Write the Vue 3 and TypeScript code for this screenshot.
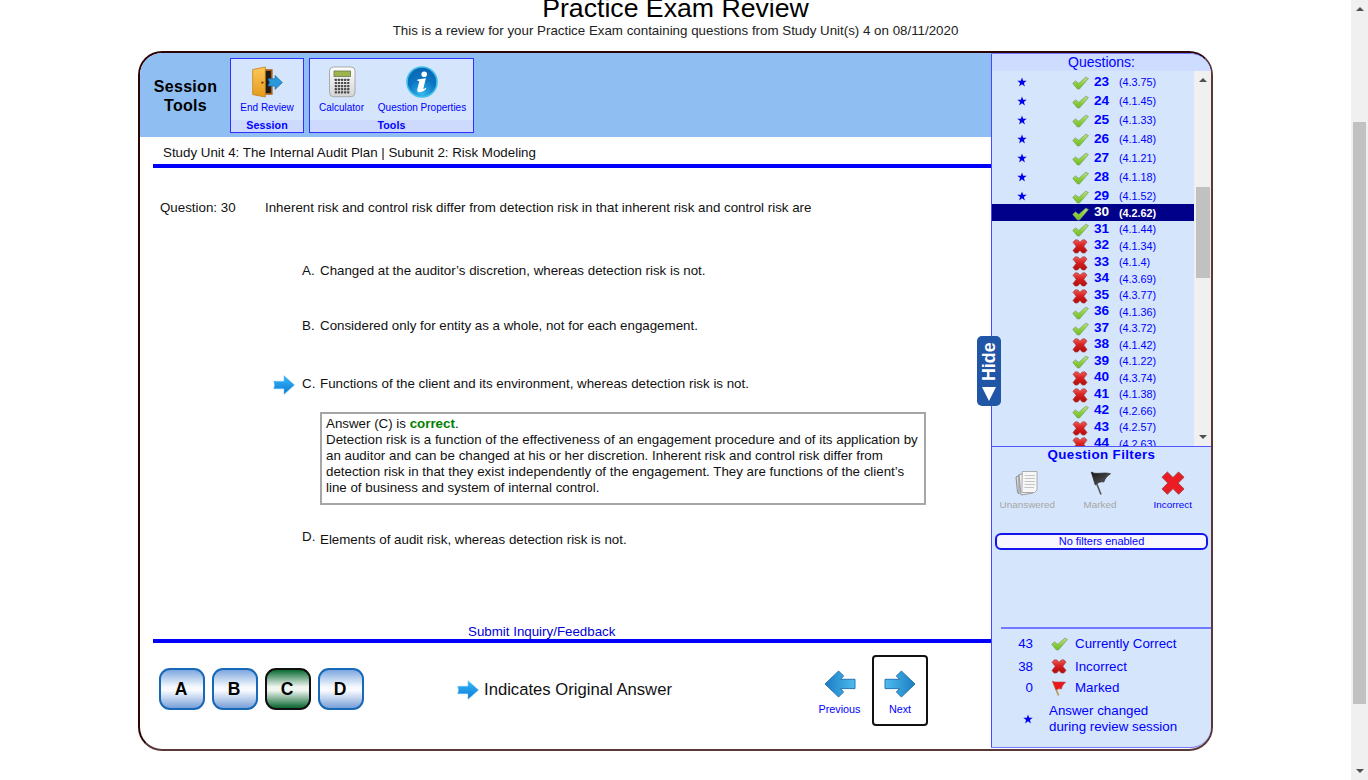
<script setup lang="ts">
interface Question { n: number; code: string; ok: boolean; changed: boolean }

const codes = ['4.3.75', '4.1.45', '4.1.33', '4.1.48', '4.1.21', '4.1.18', '4.1.52', '4.2.62', '4.1.44', '4.1.34', '4.1.4', '4.3.69', '4.3.77', '4.1.36', '4.3.72', '4.1.42', '4.1.22', '4.3.74', '4.1.38', '4.2.66', '4.2.57', '4.2.63']
const wrong = [32, 33, 34, 35, 38, 40, 41, 43, 44]
const current = 30
const questions: Question[] = codes.map((code, i) => ({
  n: 23 + i,
  code,
  ok: !wrong.includes(23 + i),
  changed: i < 7,
}))
const letters = ['A', 'B', 'C', 'D']
</script>

<template>
  <div class="window">
    <svg class="defs" width="0" height="0">
      <defs>
        <linearGradient id="gGreen" x1="0" y1="0" x2="0" y2="1"><stop offset="0" stop-color="#b8e484" /><stop offset=".5" stop-color="#8fd13f" /><stop offset="1" stop-color="#6cbc22" /></linearGradient>
        <linearGradient id="gRed" x1="0" y1="0" x2="0" y2="1"><stop offset="0" stop-color="#ee5a55" /><stop offset=".45" stop-color="#d81f1f" /><stop offset="1" stop-color="#b00c0c" /></linearGradient>
        <linearGradient id="gArrow" x1="0" y1="0" x2="0" y2="1"><stop offset="0" stop-color="#35b8f8" /><stop offset="1" stop-color="#0d7ad6" /></linearGradient>
        <linearGradient id="gNav" x1="0" y1="0" x2="1" y2="0"><stop offset="0" stop-color="#4cbcee" /><stop offset="1" stop-color="#1c7cc2" /></linearGradient>
        <linearGradient id="gNavBack" x1="1" y1="0" x2="0" y2="0"><stop offset="0" stop-color="#4cbcee" /><stop offset="1" stop-color="#1c7cc2" /></linearGradient>
        <linearGradient id="gDoor" x1="0" y1="0" x2="0" y2="1"><stop offset="0" stop-color="#fdc95a" /><stop offset="1" stop-color="#e59a1c" /></linearGradient>
        <radialGradient id="gInfo" cx=".5" cy=".9" r=".8"><stop offset="0" stop-color="#35b9ee" /><stop offset=".6" stop-color="#0c76c4" /><stop offset="1" stop-color="#0a68b6" /></radialGradient>
        <linearGradient id="gCalc" x1="0" y1="0" x2="0" y2="1"><stop offset="0" stop-color="#ffffff" /><stop offset="1" stop-color="#d4d4d4" /></linearGradient>
        <linearGradient id="gFlag" x1="0" y1="0" x2="1" y2="1"><stop offset="0" stop-color="#151515" /><stop offset="1" stop-color="#666" /></linearGradient>
        <symbol id="check" viewBox="0 0 17 14"><path d="M.8 7.4 3.4 4.9 6.8 7.4 13.8 1.2 16.4 2.6 7.4 13 5.4 12.9Z" fill="url(#gGreen)" stroke="#7f9f66" stroke-width=".8" stroke-linejoin="round" /></symbol>
        <symbol id="cross" viewBox="0 0 16 15"><path d="M1 3.3 3.3 .8 6 1 8 3.2 10.3 1 12.9 .8 15 3.1 11.8 7.2 15 11.4 12.8 14.1 10.2 13.9 8 11.4 5.7 13.9 3.1 14.1 1 11.6 4.2 7.3Z" fill="url(#gRed)" stroke="#a44242" stroke-width=".7" stroke-linejoin="round" /></symbol>
        <symbol id="star" viewBox="0 0 10 10"><path d="M5 .4 6.2 3.7 9.7 3.7 6.9 5.9 7.9 9.4 5 7.3 2.1 9.4 3.1 5.9 .3 3.7 3.8 3.7Z" fill="#0000f0" /></symbol>
        <symbol id="point" viewBox="0 0 22 20"><path d="M.8 6.3H11V.7L21.5 10 11 19.3V13.7H.8L1.6 10Z" fill="url(#gArrow)" stroke="#64baf3" stroke-width=".5" /></symbol>
      </defs>
    </svg>

    <main class="page">
      <h1>Practice Exam Review</h1>
      <p class="subtitle">This is a review for your Practice Exam containing questions from Study Unit(s) 4 on 08/11/2020</p>

      <div class="exam">
        <section class="work">
          <header class="toolbar">
            <div class="tool-title">Session<br />Tools</div>
            <div class="group session">
              <div class="tools">
                <div class="tool">
                  <svg width="32" height="32" viewBox="0 0 32 32"><path d="M10 4.2H20.7V27.8H10Z" fill="#1d1a18" stroke="#a65b16" stroke-width="1.8" /><path d="M1.7 3.6 14.3 1V31L1.7 28.6Z" fill="url(#gDoor)" stroke="#c57d17" stroke-width=".8" /><circle cx="11.4" cy="16.6" r="1.2" fill="#704208" /><path d="M17 12.8H24V9.4L31.4 16.6 24 23.4V20H17L18.6 16.4Z" fill="#2b98d9" stroke="#1d6ba8" stroke-width=".7" /></svg>
                  <span>End Review</span>
                </div>
              </div>
              <div class="caption">Session</div>
            </div>
            <div class="group utils">
              <div class="tools">
                <div class="tool calc">
                  <svg width="32" height="32" viewBox="0 0 32 32"><rect x="3.5" y="1" width="25.5" height="29.7" rx="4" fill="url(#gCalc)" stroke="#aaa" /><rect x="8" y="5" width="16.5" height="5.5" fill="#9bb54a" stroke="#6b7852" stroke-width=".8" /><g fill="#4a4a4a"><template v-for="r in 5" :key="r"><rect v-for="c in 5" :key="c" :x="5.6 + c * 3.1" :y="9.7 + r * 3.1" width="2.3" height="2.2" rx=".4" /></template></g></svg>
                  <span>Calculator</span>
                </div>
                <div class="tool props">
                  <svg width="32" height="32" viewBox="0 0 32 32"><circle cx="16" cy="16" r="15" fill="url(#gInfo)" stroke="#3ec0e8" stroke-width="1.6" /><circle cx="18.2" cy="8.2" r="2.8" fill="#fff" /><path d="M11.5 13.4 19.9 12.2 17.4 22.2C17 23.6 18 23.2 19.6 21.8L20.2 22.8C17 26.8 10.4 28 11.3 23.4L13.3 15.3 11.2 14.8Z" fill="#fff" /></svg>
                  <span>Question Properties</span>
                </div>
              </div>
              <div class="caption">Tools</div>
            </div>
          </header>

          <div class="unit"><span>Study Unit 4: The Internal Audit Plan | Subunit 2: Risk Modeling</span></div>

          <div class="question">
            <div class="stem"><span class="qno">Question: 30</span><span>Inherent risk and control risk differ from detection risk in that inherent risk and control risk are</span></div>
            <div class="option a"><span class="mark"></span><b>A.</b><span>Changed at the auditor’s discretion, whereas detection risk is not.</span></div>
            <div class="option b"><span class="mark"></span><b>B.</b><span>Considered only for entity as a whole, not for each engagement.</span></div>
            <div class="option c"><span class="mark"><svg width="22" height="20"><use href="#point" /></svg></span><b>C.</b><span>Functions of the client and its environment, whereas detection risk is not.</span></div>
            <div class="explain">
              <div>Answer (C) is <strong>correct</strong>.</div>
              <div>Detection risk is a function of the effectiveness of an engagement procedure and of its application by</div>
              <div>an auditor and can be changed at his or her discretion. Inherent risk and control risk differ from</div>
              <div>detection risk in that they exist independently of the engagement. They are functions of the client’s</div>
              <div>line of business and system of internal control.</div>
            </div>
            <div class="option d"><span class="mark"></span><b>D.</b><span>Elements of audit risk, whereas detection risk is not.</span></div>
            <div class="inquiry"><span>Submit Inquiry/Feedback</span></div>
          </div>

          <footer class="bottom">
            <div class="choices">
              <button v-for="l in letters" :key="l" :class="{ picked: l === 'C' }">{{ l }}</button>
            </div>
            <div class="original"><svg width="22" height="20"><use href="#point" /></svg><span>Indicates Original Answer</span></div>
            <div class="nav prev"><svg width="32" height="28" viewBox="0 0 32 28"><path d="M31 9.3H16.5L19.6 6 14.6 1 1 14 14.6 27 19.6 21.9 16.5 18.6H31Z" fill="url(#gNavBack)" stroke="#2476b6" /></svg><span>Previous</span></div>
            <div class="nav next"><svg width="32" height="28" viewBox="0 0 32 28"><path d="M1 9.3H15.5L12.4 6 17.4 1 31 14 17.4 27 12.4 21.9 15.5 18.6H1Z" fill="url(#gNav)" stroke="#2476b6" /></svg><span>Next</span></div>
          </footer>
        </section>

        <aside class="side">
          <div class="side-head"><span>Questions:</span></div>
          <div class="list-wrap">
            <div class="list">
              <div v-for="q in questions" :key="q.n" class="row" :class="{ tall: q.changed, current: q.n === current }">
                <span class="star"><svg v-if="q.changed" width="10" height="10"><use href="#star" /></svg></span>
                <span class="state"><svg v-if="q.ok" width="17" height="14"><use href="#check" /></svg><svg v-else width="16" height="15"><use href="#cross" /></svg></span>
                <span class="num">{{ q.n }}</span>
                <span class="code">({{ q.code }})</span>
              </div>
            </div>
            <div class="scroll inner"><i class="up"></i><div class="thumb"></div><i class="down"></i></div>
          </div>
          <div class="filters">
            <div class="filter-title">Question Filters</div>
            <div class="filter-set">
              <div class="filter off">
                <svg width="26" height="26" viewBox="0 0 26 26"><path d="M2 7 5 5.5V24L3.5 22.5Z" fill="#ddd" stroke="#777" stroke-width=".8" /><path d="M5 4.5 17 3 19 23 7 25Z" fill="#eee" stroke="#888" stroke-width=".8" /><path d="M8.3 1.5H23V20L20.5 22.5H7.9Z" fill="#f7f7f7" stroke="#999" stroke-width=".8" /><path d="M10.5 5.5H21M10.5 8.5H21M10.5 11.5H21M10.5 14.5H21M10.5 17.5H20" stroke="#c4c4c4" stroke-width="1" /></svg>
                <span>Unanswered</span>
              </div>
              <div class="filter off">
                <svg width="26" height="26" viewBox="0 0 26 26"><path d="M5 2 14 24.5" stroke="#555" stroke-width="1.6" /><path d="M4.3 2.2C10 5 16 1.6 23.6 3.7 19.8 6 17.8 9 16.8 12 13.5 11.2 11 12.7 8.2 15Z" fill="url(#gFlag)" stroke="#222" stroke-width=".6" /></svg>
                <span>Marked</span>
              </div>
              <div class="filter">
                <svg width="26" height="26" viewBox="0 0 26 26"><path d="M2 7.2 7.4 2 13 7.6 18.5 2 24 7.2 18.2 13.1 24 18.9 18.6 24.3 13 18.6 7.4 24.3 2 18.9 7.8 13.1Z" fill="#ec1c24" stroke="#a23a3f" stroke-width=".9" /></svg>
                <span>Incorrect</span>
              </div>
            </div>
            <div class="field">No filters enabled</div>
          </div>
          <div class="summary">
            <div class="sum s1"><span class="count">43</span><span class="ic"><svg width="17" height="14"><use href="#check" /></svg></span><span>Currently Correct</span></div>
            <div class="sum s2"><span class="count">38</span><span class="ic"><svg width="16" height="15"><use href="#cross" /></svg></span><span>Incorrect</span></div>
            <div class="sum s3"><span class="count">0</span><span class="ic"><svg width="16" height="16" viewBox="0 0 16 16"><path d="M2 1.5 7.5 15.5" stroke="#b9964c" stroke-width="1.6" /><path d="M1.5 1.2C5.5 3 9 1.2 14.8 2.2 12.2 4.2 10.7 6.5 10.6 9 8.2 8.6 6.5 9.2 5 10Z" fill="#e8191b" stroke="#b94b3f" stroke-width=".5" /></svg></span><span>Marked</span></div>
            <div class="changed"><span class="count"><svg width="10" height="10"><use href="#star" /></svg></span><span>Answer changed<br />during review session</span></div>
          </div>
        </aside>
        <button class="hide"><span>Hide</span><i></i></button>
      </div>
    </main>
    <div class="scroll outer"><i class="up"></i><div class="thumb"></div><i class="down"></i></div>
  </div>
</template>

<style>
body { margin: 0; overflow: hidden; background: #fff; }
</style>

<style scoped>
* { box-sizing: border-box; }
.window { display: flex; width: 1368px; height: 780px; overflow: hidden; font: 13.333px/20px "Liberation Sans", Arial, sans-serif; color: #111; white-space: nowrap; }
.defs { position: absolute; }
svg { display: block; flex: none; }
.page { width: 1351px; }
h1 { margin: -7px 0 0; font-weight: 400; font-size: 26.667px; line-height: 30px; text-align: center; height: 30px; color: #000; }
.subtitle { margin: -2px 0 0; text-align: center; height: 30px; line-height: 20px; color: #222; }
.exam { position: relative; display: flex; width: 1075px; height: 700px; margin-left: 138px; border: 2px solid; border-color: #2c0404 #5a3838 #5a3838 #2c0404; border-radius: 24px; }
.work { width: 851px; }
.toolbar { display: flex; height: 84px; padding: 5px 0 0; background: #8fbff2; border-radius: 22px 0 0 0; }
.tool-title { width: 90px; padding: 19px 0 0 1px; font: 700 16px/19px "Liberation Sans", Arial, sans-serif; text-align: center; letter-spacing: .3px; color: #000; }
.group { display: flex; flex-direction: column; height: 75px; border: 1px solid #3030ff; background: #d5e5fb; color: #0000ff; }
.session { width: 74px; margin-right: 5px; }
.utils { width: 165px; }
.tools { display: flex; height: 61px; padding-top: 7px; }
.tool { display: flex; flex-direction: column; align-items: center; flex: 1; font-size: 10px; line-height: 12px; }
.tool span { margin-top: 4px; }
.calc { flex: 0 0 63px; }
.props { flex: 0 0 98px; }
.caption { height: 12px; background: #cddafe; text-align: center; font-weight: 700; font-size: 10.667px; line-height: 11px; letter-spacing: .1px; }
.unit { height: 31px; margin-left: 13px; padding: 6px 0 0 10px; border-bottom: 4px solid #0000fa; }
.question { display: flex; flex-direction: column; height: 475px; margin-left: 13px; padding-top: 30px; border-bottom: 4px solid #0000fa; }
.question > * { flex: none; }
.stem { display: flex; padding-left: 7px; margin-bottom: 43px; height: 20px; }
.qno { width: 105px; }
.option { display: flex; height: 20px; }
.option b { width: 18px; font-weight: 400; }
.mark { width: 29px; margin-left: 120px; height: 20px; }
.b { margin-top: 35px; }
.c { margin-top: 38px; }
.c .mark svg { margin-top: 1px; }
.d { margin-top: 25px; }
.d b { margin-top: -3px; }
.explain { width: 606px; height: 93px; margin: 18px 0 0 167px; padding: 2px 0 0 4px; border: 2px solid #a6a6a6; line-height: 16px; }
.explain strong { color: #008000; }
.inquiry { margin-top: 72px; height: 20px; padding-left: 315px; color: #0000d8; }
.bottom { display: flex; align-items: flex-start; padding: 12px 0 0 19px; }
.choices { display: flex; gap: 7px; padding-top: 13px; width: 298px; }
.choices button { width: 46px; height: 42px; padding: 0 2px 0 0; border: 2px solid #1769b8; border-radius: 11px; font: 700 17.5px/36px "Liberation Sans", Arial, sans-serif; color: #000; background: linear-gradient(#7da8df, #f5f8fd 44%, #f8faff 54%, #789fd8); }
.choices .picked { border-color: #101010; background: linear-gradient(#0b6a32, #eff5f1 44%, #eef5f0 54%, #08662e); }
.original { display: flex; align-items: center; padding-top: 25px; width: 352px; font-size: 16.667px; }
.original span { margin-left: 5px; }
.nav { display: flex; flex-direction: column; align-items: center; height: 71px; font-size: 10.8px; color: #0000ff; line-height: 14px; padding-top: 15px; }
.nav span { margin-top: 4px; }
.prev { width: 61px; margin-right: 2px; }
.next { width: 56px; border: 2px solid #111; border-radius: 4px; padding-top: 13px; }
.side { width: 220px; height: 695px; border-left: 1px solid #4848ff; border-bottom: 1px solid #7777ff; border-top: 1px solid #7777ff; border-radius: 0 21px 21px 0; overflow: hidden; background: #d5e5fb; color: #0000ff; }
.side-head { height: 17px; background: #cddcff; text-align: center; font-size: 14px; line-height: 17px; }
.list-wrap { display: flex; height: 376px; border-bottom: 1px solid #5555ff; }
.list { flex: 1; overflow: hidden; height: 375px; }
.row { display: flex; align-items: center; height: 16.5px; }
.tall { height: 19px; padding-top: 3px; }
.current { background: #00008b; color: #fff; height: 17px; }
.current .code { font-weight: 700; letter-spacing: 0; }
.star { width: 10px; margin-left: 25px; }
.state { width: 17px; margin: 2px 5px 0 45px; }
.num { width: 25px; font-size: 13.6px; line-height: 16px; font-weight: 700; margin-top: -1px; }
.code { font-size: 10.8px; line-height: 16px; }
.scroll { display: flex; flex-direction: column; width: 17px; background: #f0f0f0; }
.thumb { background: #c1c1c1; width: 13px; margin: 0 auto; }
.up, .down { width: 0; height: 0; border: 4px solid transparent; margin: 0 auto; flex: none; }
.up { border-bottom-color: #505050; border-top: 0; }
.down { border-top-color: #505050; border-bottom: 0; margin-top: auto; }
.inner { height: 375px; padding: 7px 0; }
.inner .thumb { height: 91px; margin-top: 105px; width: 14px; }
.outer { height: 780px; padding: 7px 0; }
.outer .thumb { height: 582px; margin-top: 111px; }
.filters { height: 180px; }
.filter-title { font-size: 13.333px; font-weight: 700; line-height: 15px; text-align: center; letter-spacing: .4px; }
.filter-set { display: flex; padding: 8px 2px 0 0; margin-left: -1px; }
.filter { flex: 1; display: flex; flex-direction: column; align-items: center; font-size: 9.9px; line-height: 12px; }
.filter span { margin-top: 3px; }
.off { color: #a5a5a5; }
.field { height: 17px; margin: 22px 3px 0; border: 2px solid #1414ee; border-radius: 6px; background: #f8f6ff; text-align: center; font-size: 11px; line-height: 13px; }
.summary { margin-left: 9px; border-top: 2px solid #7079ff; padding-top: 4px; }
.sum { display: flex; align-items: center; height: 21px; }
.count { width: 32px; display: flex; justify-content: flex-end; }
.ic { width: 17px; margin: 0 7px 0 18px; }
.s2 { margin-top: 2px; }
.changed { display: flex; align-items: center; line-height: 16px; margin-top: 5px; }
.changed span + span { margin-left: 16px; }
.hide { position: absolute; left: 837px; top: 283px; width: 24px; height: 70px; padding: 5px 0; border: 0; border-radius: 5px; background: #2155a5; color: #fff; display: flex; flex-direction: column; align-items: center; }
.hide span { writing-mode: vertical-rl; transform: rotate(180deg); font: 700 17.8px/20px "Liberation Sans", Arial, sans-serif; height: 41px; }
.hide i { width: 0; height: 0; border: 7px solid transparent; border-top: 14px solid #fff; border-bottom: 0; margin-top: 5px; }
</style>
